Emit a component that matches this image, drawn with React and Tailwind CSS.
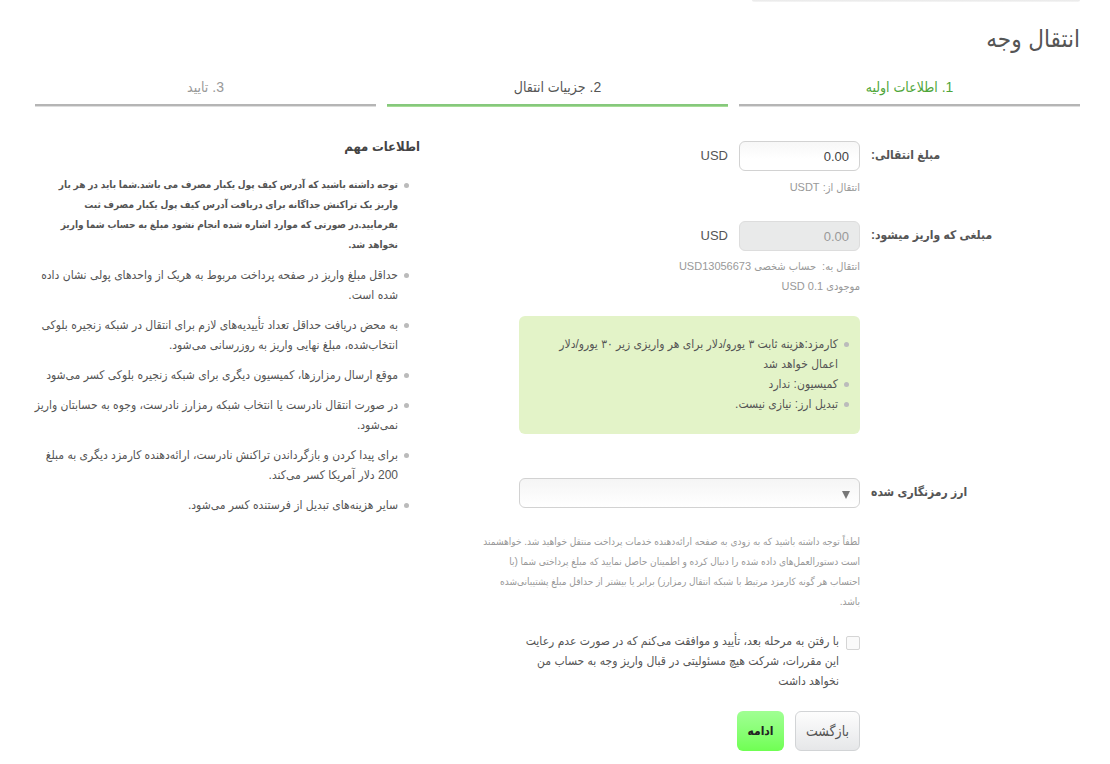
import React from "react";

const steps = [
  { text: "1. اطلاعات اولیه", color: "text-[#4fa63a]", line: "border-[#b5b5b5] bg-[#dedede]" },
  { text: "2. جزییات انتقال", color: "text-[#555]", line: "border-[#86c87c] bg-[#a6dd96]", current: true },
  { text: "3. تایید", color: "text-[#999]", line: "border-[#b5b5b5] bg-[#dedede]" },
];

const fees = [
  ["کارمزد:هزینه ثابت ۳ یورو/دلار برای هر واریزی زیر ۳۰ یورو/دلار", "اعمال خواهد شد"],
  ["کمیسیون: ندارد"],
  ["تبدیل ارز: نیازی نیست."],
];

const notes = [
  {
    bold: true,
    lines: [
      "توجه داشته باشید که آدرس کیف پول یکبار مصرف می باشد.شما باید در هر بار",
      "واریز یک تراکنش جداگانه برای دریافت آدرس کیف پول یکبار مصرف ثبت",
      "بفرمایید.در صورتی که موارد اشاره شده انجام نشود مبلغ به حساب شما واریز",
      "نخواهد شد.",
    ],
  },
  { lines: ["حداقل مبلغ واریز در صفحه پرداخت مربوط به هریک از واحدهای پولی نشان داده", "شده است."] },
  {
    lines: [
      "به محض دریافت حداقل تعداد تأییدیه‌های لازم برای انتقال در شبکه زنجیره بلوکی",
      "انتخاب‌شده، مبلغ نهایی واریز به روزرسانی می‌شود.",
    ],
  },
  { lines: ["موقع ارسال رمزارزها، کمیسیون دیگری برای شبکه زنجیره بلوکی کسر می‌شود"] },
  { lines: ["در صورت انتقال نادرست یا انتخاب شبکه رمزارز نادرست، وجوه به حسابتان واریز", "نمی‌شود."] },
  {
    lines: [
      "برای پیدا کردن و بازگرداندن تراکنش نادرست، ارائه‌دهنده کارمزد دیگری به مبلغ",
      "200 دلار آمریکا کسر می‌کند.",
    ],
  },
  { lines: ["سایر هزینه‌های تبدیل از فرستنده کسر می‌شود."] },
];

const notice = [
  "لطفاً توجه داشته باشید که به زودی به صفحه ارائه‌دهنده خدمات پرداخت منتقل خواهید شد. خواهشمند",
  "است دستورالعمل‌های داده شده را دنبال کرده و اطمینان حاصل نمایید که مبلغ پرداختی شما (با",
  "احتساب هر گونه کارمزد مرتبط با شبکه انتقال رمزارز) برابر یا بیشتر از حداقل مبلغ پشتیبانی‌شده",
  "باشد.",
];

const agreement = [
  "با رفتن به مرحله بعد، تأیید و موافقت می‌کنم که در صورت عدم رعایت",
  "این مقررات، شرکت هیچ مسئولیتی در قبال واریز وجه به حساب من",
  "نخواهد داشت",
];

function Lines({ lines }) {
  return lines.map((line, i) => (
    <React.Fragment key={line}>
      {i > 0 && <br />}
      {line}
    </React.Fragment>
  ));
}

function Bullet({ lines, className = "" }) {
  return (
    <li className={`flex gap-1.5 whitespace-nowrap ${className}`}>
      <span className="mt-2 size-[5px] shrink-0 rounded-full bg-[#bbb]" />
      <span>
        <Lines lines={lines} />
      </span>
    </li>
  );
}

function Row({ label, htmlFor, children, className = "" }) {
  return (
    <div className={`flex gap-[11px] ${className}`}>
      <label
        htmlFor={htmlFor}
        className="w-[209px] shrink-0 text-left text-xs leading-[28px] font-bold text-[#555]"
      >
        {label}
      </label>
      <div className="min-w-0 flex-1">{children}</div>
    </div>
  );
}

export default function App() {
  return (
    <div
      dir="rtl"
      className="min-h-screen bg-white pr-[30px] pl-[35px] font-['Liberation_Sans','DejaVu_Sans_Condensed','DejaVu_Sans',sans-serif] text-xs leading-5 text-[#555]"
    >
      <div className="h-[2px] w-[328px] rounded-b bg-linear-to-b from-[#e8e8e8] to-[#f6f6f6]" />
      <h1 className="pt-5 text-2xl leading-[34px] text-[#555]">انتقال وجه</h1>

      <ol className="mt-5 grid grid-cols-3 gap-[11px] text-sm">
        {steps.map((s) => (
          <li key={s.text} aria-current={s.current ? "step" : undefined} className={`text-center ${s.color}`}>
            <div className="h-7 pt-px">{s.text}</div>
            <div className={`h-[3px] border-t-2 ${s.line}`} />
          </li>
        ))}
      </ol>

      <div className="mt-[30px] flex items-start justify-between">
        <form className="w-[611px] pt-1" onSubmit={(e) => e.preventDefault()}>
          <Row label="مبلغ انتقالی:" htmlFor="amount">
            <div className="flex items-center gap-[11px] text-[13px]">
              <input
                id="amount"
                dir="ltr"
                defaultValue="0.00"
                className="h-[30px] w-[121px] rounded-md border border-[#d2d2d2] bg-linear-to-b from-[#f7f7f7] to-white to-60% px-2.5 text-right text-[#444]"
              />
              <span>USD</span>
            </div>
            <p className="mt-1.5 text-[11px] text-[#999]">انتقال از: USDT</p>
          </Row>

          <Row label="مبلغی که واریز میشود:" htmlFor="deposit" className="mt-6">
            <div className="flex items-center gap-[11px] text-[13px]">
              <input
                id="deposit"
                dir="ltr"
                disabled
                defaultValue="0.00"
                className="h-[30px] w-[121px] rounded-md border border-[#ddd] bg-[#e9eaea] px-2.5 text-right text-[#999]"
              />
              <span>USD</span>
            </div>
            <p className="mt-[5px] text-[11px] text-[#999]">انتقال به:&nbsp; حساب شخصی USD13056673</p>
            <p className="text-[11px] text-[#999]">
              موجودی <bdi dir="ltr">USD 0.1</bdi>
            </p>
          </Row>

          <div className="mt-5 mr-[220px] min-h-[118px] w-[341px] rounded-md bg-[#e3f3c8] pt-[18px] pr-[11px] pl-4">
            <ul>
              {fees.map((f) => (
                <Bullet key={f[0]} lines={f} />
              ))}
            </ul>
          </div>

          <Row label="ارز رمزنگاری شده" htmlFor="currency" className="mt-11">
            <div className="grid w-[341px] items-center">
              <select
                id="currency"
                defaultValue=""
                className="col-start-1 row-start-1 h-[30px] w-full appearance-none rounded-md border border-[#d2d2d2] bg-linear-to-b from-[#f5f5f5] to-white px-3"
              >
                <option value=""></option>
                <option value="usdt">USDT</option>
              </select>
              <svg viewBox="0 0 8 8" className="pointer-events-none col-start-1 row-start-1 mt-1 mr-2.5 size-2" fill="#777">
                <path d="M0 0h8L4 8z" />
              </svg>
            </div>
          </Row>

          <p className="mt-6 mr-[220px] text-[10px] leading-5 whitespace-nowrap text-[#999]">
            <Lines lines={notice} />
          </p>

          <div className="mt-[19px] mr-[220px] flex gap-[7px]">
            <input
              id="agree"
              type="checkbox"
              className="mt-[5px] size-3.5 shrink-0 appearance-none rounded-xs border border-[#d5d5d5] bg-[#fafafa] checked:bg-[#7dff6a]"
            />
            <label htmlFor="agree" className="whitespace-nowrap">
              <Lines lines={agreement} />
            </label>
          </div>

          <div className="mt-5 mr-[220px] flex gap-[11px] text-sm">
            <button
              type="button"
              className="h-10 w-[65px] rounded-md border border-[#d2d4d6] bg-linear-to-b from-[#fdfdfd] to-[#e6e7e9] text-[#555]"
            >
              بازگشت
            </button>
            <button
              type="submit"
              className="h-10 w-[47px] rounded-md bg-linear-to-b from-[#a0ff93] to-[#6fff52] text-xs font-bold text-[#222]"
            >
              ادامه
            </button>
          </div>
        </form>

        <aside className="w-[385px]">
          <h2 className="text-[13px] leading-5 font-bold text-[#444]">اطلاعات مهم</h2>
          <ul className="mt-[18px] flex flex-col gap-2.5 pr-[11px]">
            {notes.map((n) => (
              <Bullet key={n.lines[0]} lines={n.lines} className={n.bold ? "text-[10px] leading-5 font-bold" : ""} />
            ))}
          </ul>
        </aside>
      </div>
    </div>
  );
}
